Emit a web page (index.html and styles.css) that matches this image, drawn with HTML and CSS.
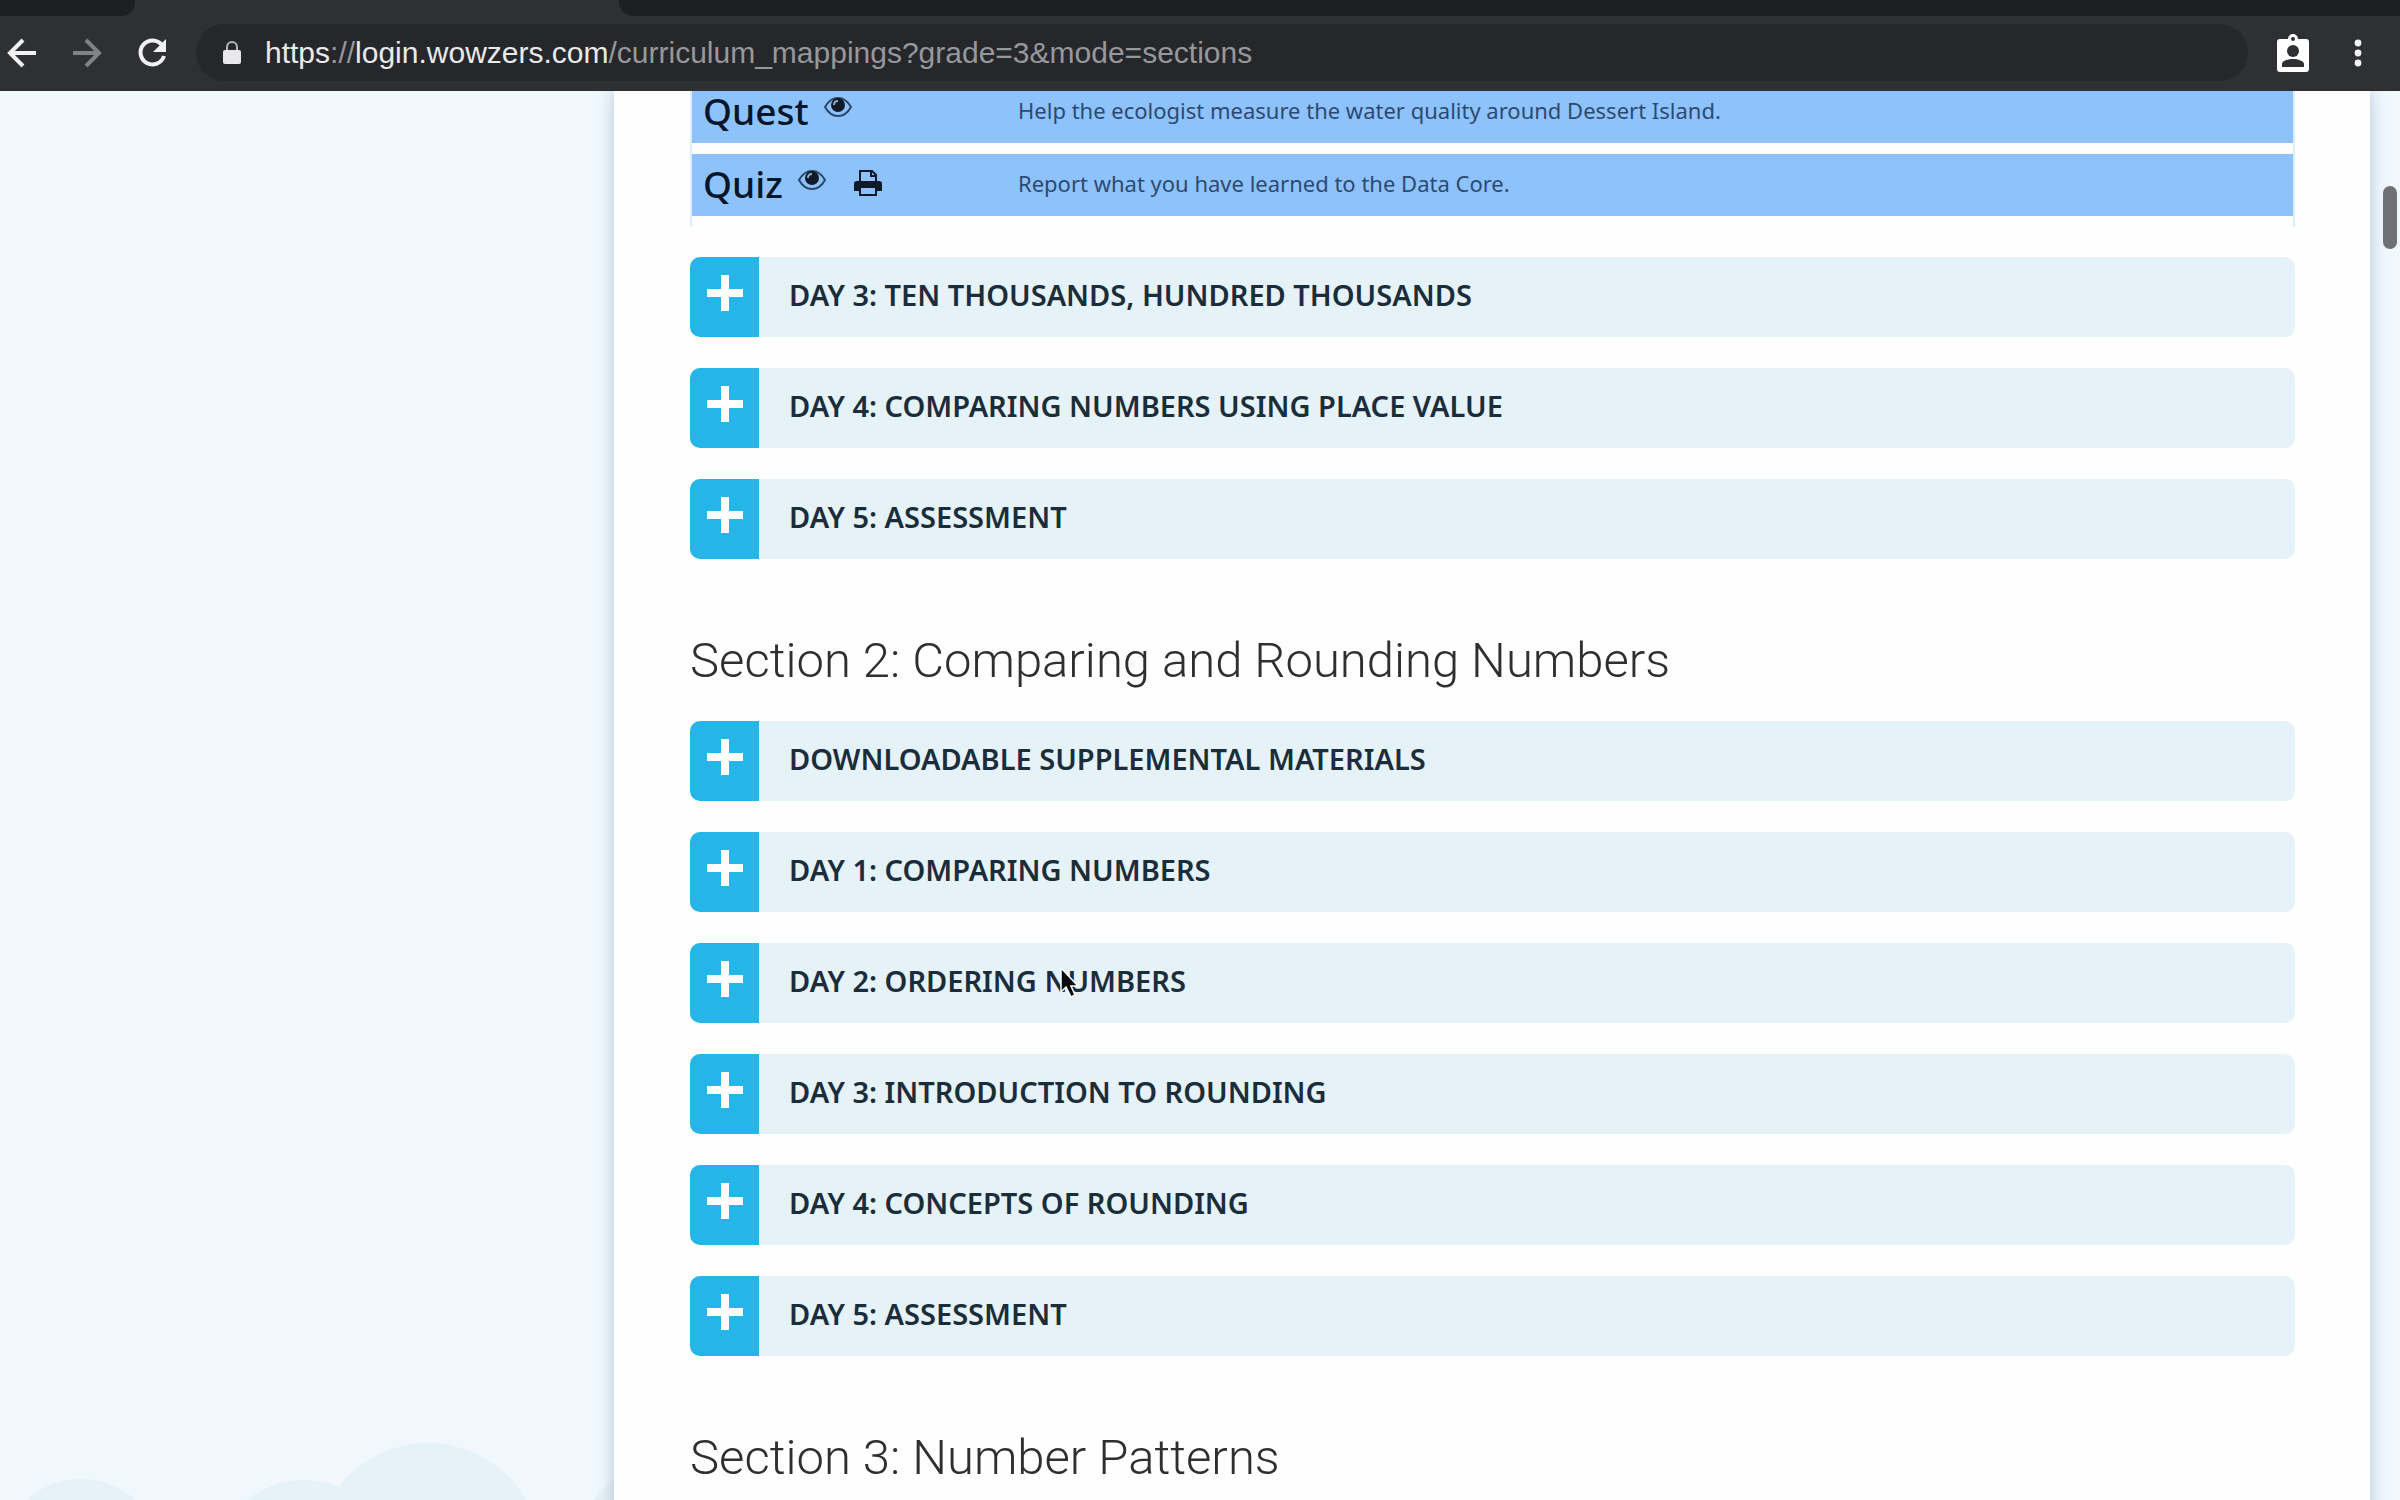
FILE: index.html
```html
<!DOCTYPE html>
<html lang="en">
<head>
    <meta charset="UTF-8">
    <meta name="viewport" content="width=device-width, initial-scale=1.0">
    <title>Curriculum Mappings</title>
    <link rel="stylesheet" href="styles.css">
</head>
<body>
    <!-- icons used more than once -->
    <svg width="0" height="0" class="defs">
        <symbol id="plus" viewBox="0 0 36 36"><path d="M14 0h8v14h14v8H22v14h-8V22H0v-8h14z" fill="#fff"/></symbol>
        <symbol id="eye" viewBox="0 0 28 20">
            <path d="M1 10Q6 1 14 1t13 9Q22 19 14 19T1 10z" fill="none" stroke="#2c4666" stroke-width="2"/>
            <circle cx="14" cy="8" r="7" fill="#101a28"/>
            <path d="M10 8q0-4 4-4" fill="none" stroke="#8fa9c4" stroke-width="2"/>
        </symbol>
    </svg>

    <header class="browser">
        <div class="tabs">
            <div class="tab tab-left"></div>
            <div class="tab tab-right"></div>
        </div>
        <div class="toolbar">
            <button class="nav" aria-label="Back">
                <svg width="30" height="30" viewBox="0 0 30 30"><path d="M29 15H3M16 2L3 15l13 13" fill="none" stroke="#f1f1f2" stroke-width="4"/></svg>
            </button>
            <button class="nav" aria-label="Forward">
                <svg width="30" height="30" viewBox="0 0 30 30"><path d="M1 15h26M14 2l13 13-13 13" fill="none" stroke="#818285" stroke-width="4"/></svg>
            </button>
            <button class="nav" aria-label="Reload">
                <svg width="30" height="30" viewBox="0 0 30 30"><path d="M25 7A12 12 0 1 0 27 18" fill="none" stroke="#f1f1f2" stroke-width="4"/><path d="M29 1v13H16z" fill="#f1f1f2"/></svg>
            </button>
            <div class="address" role="textbox" aria-label="Address">
                <svg width="18" height="24" viewBox="0 0 18 24"><path d="M4 10V6a5 5 0 0 1 10 0v4" fill="none" stroke="#b5b6b9" stroke-width="2"/><rect y="9" width="18" height="14" rx="2" fill="#e8e8ea"/></svg>
                <span class="url"><b>https</b>://<b>login.wowzers.com</b>/curriculum_mappings?grade=3&amp;mode=sections</span>
            </div>
            <button class="profile" aria-label="Profile">
                <svg width="32" height="40" viewBox="0 0 32 40">
                    <path d="M3 6h8a5 5 0 0 1 10 0h8a3 3 0 0 1 3 3v27a3 3 0 0 1-3 3H3a3 3 0 0 1-3-3V9a3 3 0 0 1 3-3z" fill="#fff"/>
                    <circle cx="16" cy="6" r="2" fill="#2f3034"/>
                    <circle cx="16" cy="18" r="6" fill="#2f3034"/>
                    <path d="M5 34v-3c0-3 6-5 11-5s11 2 11 5v3z" fill="#2f3034"/>
                </svg>
            </button>
            <button class="menu" aria-label="Menu">
                <svg width="8" height="28" viewBox="0 0 8 28" fill="#f1f1f2"><circle cx="4" cy="4" r="3.4"/><circle cx="4" cy="14" r="3.4"/><circle cx="4" cy="24" r="3.4"/></svg>
            </button>
        </div>
    </header>

    <div class="page">
        <svg class="clouds" width="614" height="60" viewBox="0 0 614 60" fill="#e5f2f7">
            <circle cx="81" cy="121" r="82"/>
            <circle cx="304" cy="131" r="91"/>
            <circle cx="428" cy="116" r="113"/>
            <circle cx="672" cy="121" r="100"/>
        </svg>
        <main class="panel">
            <table class="lessons">
                <tr>
                    <th scope="row">Quest <a href="#" aria-label="Preview quest"><svg width="28" height="20"><use href="#eye"/></svg></a></th>
                    <td>Help the ecologist measure the water quality around Dessert Island.</td>
                </tr>
                <tr>
                    <th scope="row">Quiz <a href="#" aria-label="Preview quiz"><svg width="28" height="20"><use href="#eye"/></svg></a>
                        <a href="#" class="print" aria-label="Print quiz"><svg width="28" height="28" viewBox="0 0 28 28">
                            <path d="M6 14V2h12l4 4v8" fill="none" stroke="#101a28" stroke-width="2"/>
                            <path d="M17 2v5h5" fill="none" stroke="#101a28" stroke-width="2"/>
                            <path d="M3 12h22a3 3 0 0 1 3 3v7h-5v-4H5v4H0v-7a3 3 0 0 1 3-3z" fill="#101a28"/>
                            <path d="M6 18h16v8H6z" fill="none" stroke="#101a28" stroke-width="2"/>
                        </svg></a></th>
                    <td>Report what you have learned to the Data Core.</td>
                </tr>
            </table>

            <div class="days">
                <button class="day"><span class="sign"><svg width="36" height="36"><use href="#plus"/></svg></span><span class="label">DAY 3: TEN THOUSANDS, HUNDRED THOUSANDS</span></button>
                <button class="day"><span class="sign"><svg width="36" height="36"><use href="#plus"/></svg></span><span class="label">DAY 4: COMPARING NUMBERS USING PLACE VALUE</span></button>
                <button class="day"><span class="sign"><svg width="36" height="36"><use href="#plus"/></svg></span><span class="label">DAY 5: ASSESSMENT</span></button>
            </div>

            <h2>Section 2: Comparing and Rounding Numbers</h2>
            <div class="days">
                <button class="day"><span class="sign"><svg width="36" height="36"><use href="#plus"/></svg></span><span class="label">DOWNLOADABLE SUPPLEMENTAL MATERIALS</span></button>
                <button class="day"><span class="sign"><svg width="36" height="36"><use href="#plus"/></svg></span><span class="label">DAY 1: COMPARING NUMBERS</span></button>
                <button class="day"><span class="sign"><svg width="36" height="36"><use href="#plus"/></svg></span><span class="label">DAY 2: ORDERING NUMBERS</span></button>
                <button class="day"><span class="sign"><svg width="36" height="36"><use href="#plus"/></svg></span><span class="label">DAY 3: INTRODUCTION TO ROUNDING</span></button>
                <button class="day"><span class="sign"><svg width="36" height="36"><use href="#plus"/></svg></span><span class="label">DAY 4: CONCEPTS OF ROUNDING</span></button>
                <button class="day"><span class="sign"><svg width="36" height="36"><use href="#plus"/></svg></span><span class="label">DAY 5: ASSESSMENT</span></button>
            </div>

            <h2>Section 3: Number Patterns</h2>
        </main>
        <div class="thumb"></div>
    </div>

    <svg class="cursor" width="20" height="32" viewBox="0 0 20 32"><path d="M1 1v24l5-5 5 10 4-2-4-9h7z" fill="#0b0b0d" stroke="#fff" stroke-width="1.5"/></svg>
</body>
</html>
```
FILE: styles.css
```css
* {
    box-sizing: border-box;
}
body {
    margin: 0;
    height: 100vh;
    display: flex;
    flex-direction: column;
    overflow: hidden;
    font-family: "Noto Sans", sans-serif;
    background: #f0f8fe;
}
button {
    border: none;
    padding: 0;
    background: none;
    font: inherit;
    cursor: pointer;
}
svg {
    display: block;
}
.defs {
    position: absolute;
}

/* browser bar */
.browser {
    flex: none;
    background: #2f3034;
}
.tabs {
    display: flex;
    justify-content: space-between;
    height: 16px;
}
.tab {
    background: #1c2021;
}
.tab-left {
    width: 135px;
    border-bottom-right-radius: 14px;
}
.tab-right {
    width: calc(100% - 619px);
    border-bottom-left-radius: 14px;
}
.toolbar {
    display: flex;
    align-items: center;
    height: 75px;
    padding: 0 38px 2px 7px;
}
.nav {
    margin-right: 35px;
}
.address {
    flex: 1;
    display: flex;
    align-items: center;
    gap: 24px;
    height: 57px;
    margin-left: -6px;
    padding-left: 27px;
    border-radius: 29px;
    background: #26272b;
}
.url {
    font: 30px "Liberation Sans", sans-serif;
    color: #97989c;
    white-space: nowrap;
}
.url b {
    font-weight: normal;
    color: #e9eaec;
}
.profile {
    margin: 0 45px 0 29px;
}

/* page */
.page {
    flex: 1;
    position: relative;
    display: grid;
    grid-template-columns: 614fr 1756fr 30fr;
    overflow: hidden;
}
.clouds {
    position: absolute;
    left: 0;
    bottom: 0;
}
.panel {
    grid-column: 2;
    position: relative;
    padding: 0 75px 0 76px;
    background: #fefefe;
    box-shadow: 0 0 16px rgba(60, 80, 110, 0.3);
}
.thumb {
    position: absolute;
    top: 95px;
    right: 3px;
    width: 14px;
    height: 63px;
    border-radius: 7px;
    background: #707176;
}

.lessons {
    width: 100%;
    margin: -21px 0 30px;
    border-left: 2px solid #d9efff;
    border-right: 2px solid #d9efff;
    border-spacing: 0 11px;
}
.lessons tr {
    height: 62px;
    background: #8ec2fd;
}
.lessons th {
    width: 326px;
    padding: 0 0 2px 11px;
    text-align: left;
    font-size: 37px;
    line-height: 50px;
    font-weight: 500;
    color: #07162b;
}
.lessons td {
    padding: 0 0 4px;
    font-size: 22px;
    color: #2c4a70;
}
.lessons a {
    display: inline-block;
    margin-left: 6px;
    vertical-align: 8px;
}
.lessons .print {
    margin-left: 18px;
    vertical-align: 1px;
}

.days {
    display: grid;
    gap: 31px;
}
.day {
    display: flex;
    height: 80px;
    border-radius: 10px;
    overflow: hidden;
    background: #e5f2f7;
}
.sign {
    display: grid;
    place-items: center;
    width: 69px;
    height: 80px;
    padding-bottom: 8px;
    background: #26b5e9;
}
.label {
    padding-left: 30px;
    font-size: 29px;
    font-weight: 600;
    line-height: 76px;
    color: #1b2d3a;
}
h2 {
    margin: 72px 0 30px;
    font: 350 49px/60px Roboto, sans-serif;
    color: #2f2f31;
}

.cursor {
    position: absolute;
    left: 1060px;
    top: 967px;
}
```
